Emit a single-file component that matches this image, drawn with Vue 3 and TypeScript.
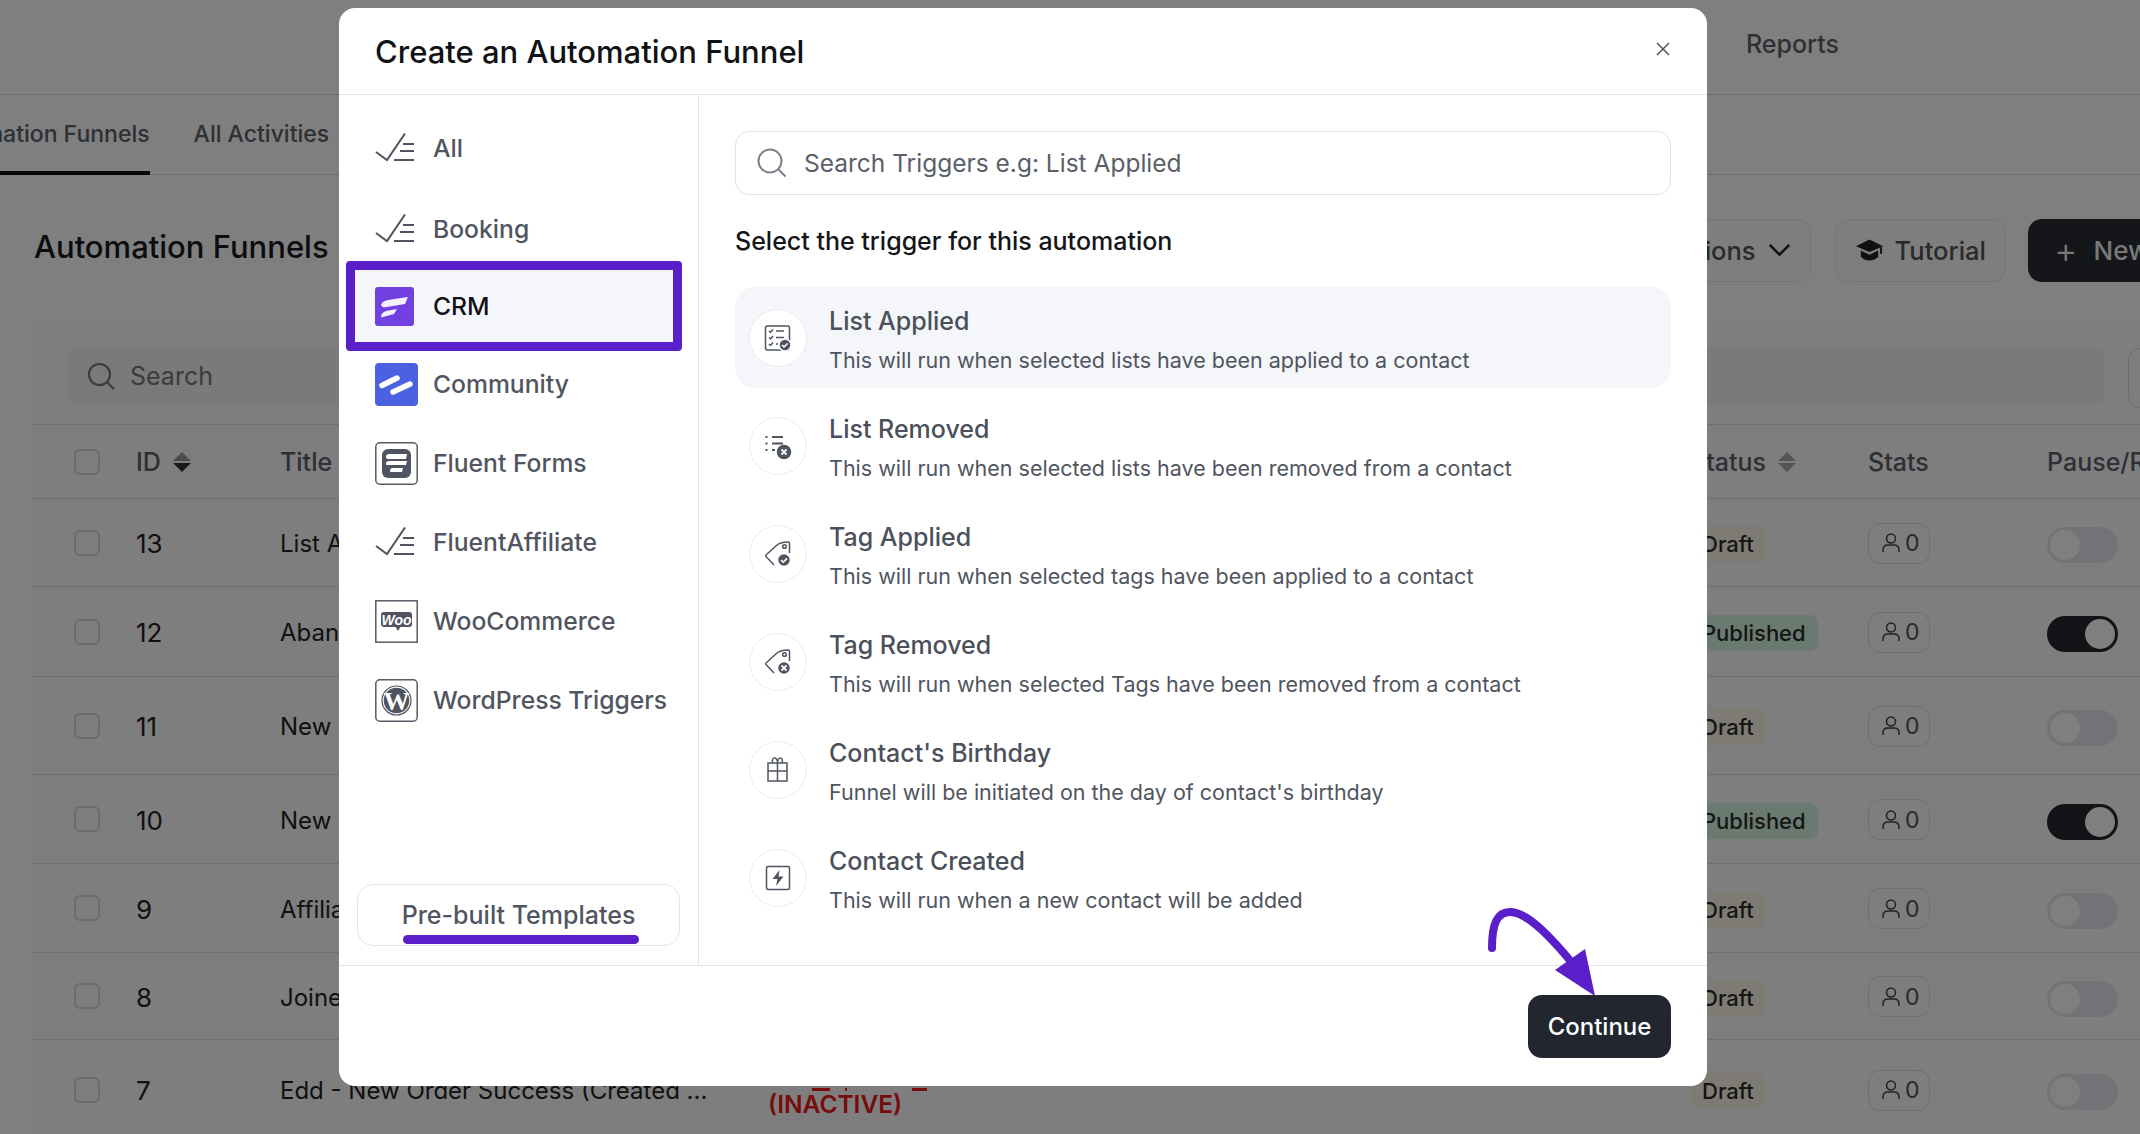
<script setup lang="ts">
interface Row { id: number; title: string; status: 'Draft' | 'Published'; on: boolean; height: number; label?: boolean }
interface Trigger { title: string; desc: string; icon: string; active?: boolean }

const rows: Row[] = [
  { id: 13, title: 'List Applied', status: 'Draft', on: false, height: 88 },
  { id: 12, title: 'Abandoned Cart', status: 'Published', on: true, height: 90 },
  { id: 11, title: 'New Contact', status: 'Draft', on: false, height: 98 },
  { id: 10, title: 'New Order', status: 'Published', on: true, height: 89 },
  { id: 9, title: 'Affiliate Joined', status: 'Draft', on: false, height: 89 },
  { id: 8, title: 'Joined List', status: 'Draft', on: false, height: 87 },
  { id: 7, title: 'Edd - New Order Success (Created ...', status: 'Draft', on: false, height: 100, label: true },
]

const triggers: Trigger[] = [
  { title: 'List Applied', desc: 'This will run when selected lists have been applied to a contact', icon: 'listok', active: true },
  { title: 'List Removed', desc: 'This will run when selected lists have been removed from a contact', icon: 'listx' },
  { title: 'Tag Applied', desc: 'This will run when selected tags have been applied to a contact', icon: 'tagok' },
  { title: 'Tag Removed', desc: 'This will run when selected Tags have been removed from a contact', icon: 'tagx' },
  { title: "Contact's Birthday", desc: "Funnel will be initiated on the day of contact's birthday", icon: 'gift' },
  { title: 'Contact Created', desc: 'This will run when a new contact will be added', icon: 'bolt' },
]

const cats: { name: string; icon: string }[] = [
  { name: 'All', icon: 'check' },
  { name: 'Booking', icon: 'check' },
  { name: 'CRM', icon: 'crm' },
  { name: 'Community', icon: 'community' },
  { name: 'Fluent Forms', icon: 'forms' },
  { name: 'FluentAffiliate', icon: 'check' },
  { name: 'WooCommerce', icon: 'woo' },
  { name: 'WordPress Triggers', icon: 'wp' },
]
</script>

<template>
  <div class="page">
    <nav class="topnav"><span class="nav-link">Reports</span></nav>
    <div class="tabs">
      <span class="tab tab-on">Automation Funnels</span>
      <span class="tab">All Activities</span>
    </div>
    <header class="head">
      <h1 class="head-title">Automation Funnels</h1>
      <button class="ghost ghost-options">Options
        <svg width="23" height="14" viewBox="0 0 20 12"><path d="M1.500 1.500 10 10l8.500-8.500" fill="none" stroke="#222" stroke-width="2.200"/></svg>
      </button>
      <button class="ghost ghost-tut">
        <svg width="27" height="22" viewBox="0 0 28 22"><path d="M14 0 28 7 14 13 0 7z" fill="#222"/><path d="M5 11.500 14 16l9-4.500V18c-2 2.500-5.500 4-9 4s-7-1.500-9-4z" fill="#222"/><path d="M26 8v7" stroke="#222" stroke-width="2"/></svg>
        Tutorial
      </button>
      <button class="primary"><span class="plus">+</span>New Funnel</button>
    </header>

    <section class="card">
      <div class="tools">
        <div class="bg-search">
          <svg width="28" height="28" viewBox="0 0 28 28" fill="none" stroke="#777" stroke-width="2.200"><circle cx="12.500" cy="12.500" r="10.500"/><path d="m20 20 7 7"/></svg>
          <span>Search</span>
        </div>
        <div class="filter"></div>
      </div>
      <div class="trow thead">
        <span class="box"></span>
        <span class="th">ID
          <svg class="sort" width="18" height="20" viewBox="0 0 18 20"><path d="M9 0 18 9H0z" fill="#999"/><path d="M0 11h18l-9 9z" fill="#333"/></svg>
        </span>
        <span class="th">Title</span>
        <span class="th">Status
          <svg class="sort" width="18" height="20" viewBox="0 0 18 20"><path d="M9 0 18 9H0z" fill="#aaa"/><path d="M0 11h18l-9 9z" fill="#aaa"/></svg>
        </span>
        <span class="th">Stats</span>
        <span class="th">Pause/Run</span>
      </div>
      <div v-for="r in rows" :key="r.id" class="trow" :style="{ height: r.height + 'px' }">
        <span class="box"></span>
        <span class="cell">{{ r.id }}</span>
        <span class="cell title-cell">
          <span class="name">{{ r.title }}</span>
          <span v-if="r.label" class="label">
            <span class="marks"><i class="m1"></i><i class="m2"></i><i class="m3"></i></span>
            <span class="inactive">(INACTIVE)</span>
          </span>
        </span>
        <span class="pill-cell"><span class="pill" :class="r.status === 'Draft' ? 'pill-draft' : 'pill-pub'">{{ r.status }}</span></span>
        <span class="stat">
          <svg width="18" height="20" viewBox="0 0 18 20" fill="none" stroke="#444" stroke-width="1.500"><circle cx="9" cy="5.500" r="4.500"/><path d="M1 19v-2c0-3 2-5 5-5h6c3 0 5 2 5 5v2"/></svg>
          <span>0</span>
        </span>
        <span class="toggle" :class="{ 'toggle-on': r.on }"><i></i></span>
      </div>
    </section>

    <div class="overlay"></div>

    <div class="modal">
      <div class="m-head">
        <h2 class="m-title">Create an Automation Funnel</h2>
        <svg class="m-close" width="16" height="16" viewBox="0 0 16 16"><path d="m2 2 12 12M14 2 2 14" stroke="#555" stroke-width="1.500"/></svg>
      </div>
      <div class="m-body">
        <aside class="side">
          <div class="cats">
            <div v-for="c in cats" :key="c.name" class="cat" :class="{ 'cat-on': c.name === 'CRM', 'cat-booking': c.name === 'Booking' }">
              <span class="cat-icon">
                <svg v-if="c.icon === 'check'" width="40" height="30" viewBox="0 0 40 30" fill="none" stroke="#4f5560" stroke-width="2">
                  <path d="M1 19l11 8L30 .5"/><path d="M28 11h11M25 18h14M19 27h20"/>
                </svg>
                <svg v-else-if="c.icon === 'crm'" width="39" height="39" viewBox="0 0 39 39">
                  <rect width="39" height="39" rx="3" fill="#7040e0"/>
                  <path d="M6 18c1-3 3-4 7-5l20-3-3 7-18 3c-3 .5-5 .5-6-2z" fill="#fff" opacity=".92"/>
                  <path d="M6 30c0-3 2-5 5-6l11-2-3 5-9 2.500c-2 .5-3.500 1-4 .5z" fill="#fff" opacity=".92"/>
                </svg>
                <svg v-else-if="c.icon === 'community'" width="43" height="43" viewBox="0 0 43 43">
                  <rect width="43" height="43" rx="4" fill="#4a62e2"/>
                  <path d="M7 22.500 22 15M18 29l17-8" stroke="#fff" stroke-width="5.500" stroke-linecap="round"/>
                </svg>
                <svg v-else-if="c.icon === 'forms'" width="43" height="43" viewBox="0 0 43 43">
                  <rect x=".8" y=".8" width="41.400" height="41.400" rx="4" fill="#fff" stroke="#565b66" stroke-width="1.500"/>
                  <rect x="7" y="7" width="29" height="29" rx="6" fill="#4f5460"/>
                  <path d="M11 15c0-2 1-3 3-3h18l-1 5H13c-1 0-2-1-2-2zM11 22c0-2 1-3 3-3h18l-1 4H13c-1 0-2 0-2-1zM15 29c0-2 1-3 3-3h10l-1 4H17c-1 0-2 0-2-1z" fill="#fff"/>
                </svg>
                <svg v-else-if="c.icon === 'woo'" width="43" height="43" viewBox="0 0 43 43">
                  <rect x=".8" y=".8" width="41.400" height="41.400" fill="#fff" stroke="#565b66" stroke-width="1.500"/>
                  <rect x="6" y="12" width="31" height="15" rx="3" fill="#4f5460"/>
                  <path d="M20 26h6l-3 5z" fill="#4f5460"/>
                  <text x="21.500" y="24.500" text-anchor="middle" class="woo-text">Woo</text>
                </svg>
                <svg v-else width="43" height="43" viewBox="0 0 43 43">
                  <rect x=".8" y=".8" width="41.400" height="41.400" rx="4" fill="#fff" stroke="#565b66" stroke-width="1.500"/>
                  <circle cx="21.500" cy="21.500" r="14.500" fill="none" stroke="#4f5460" stroke-width="1.200"/>
                  <circle cx="21.500" cy="21.500" r="12.800" fill="#4f5460"/>
                  <text x="21.500" y="30.500" text-anchor="middle" class="wp-text">W</text>
                </svg>
              </span>
              <span class="cat-name">{{ c.name }}</span>
            </div>
          </div>
          <button class="tpl">Pre-built Templates<span class="tpl-line"></span></button>
        </aside>
        <main class="main">
          <div class="search">
            <svg width="30" height="30" viewBox="0 0 30 30" fill="none" stroke="#7a808a" stroke-width="2"><circle cx="13" cy="13" r="11.500"/><path d="m21.500 21.500 7 7"/></svg>
            <span>Search Triggers e.g: List Applied</span>
          </div>
          <h3 class="pick">Select the trigger for this automation</h3>
          <div class="list">
            <div v-for="t in triggers" :key="t.title" class="item" :class="{ 'item-on': t.active }">
              <span class="round">
                <svg width="28" height="28" viewBox="0 0 28 28" fill="none" stroke="#4f5560" stroke-width="1.500">
                  <template v-if="t.icon === 'listok'">
                    <rect x="1.500" y="2" width="24" height="24" rx="2"/>
                    <path d="m5 7 1.500 1.500L9 5.500m-4 8 1.500 1.500L9 12m-4 8 1.500 1.500L9 18.500M12 7h8M12 13.500h8M12 20h2"/>
                    <circle cx="21" cy="21" r="6" fill="#4f5560" stroke="#fff"/>
                    <path d="m18 21 2 2 3.500-3.500" stroke="#fff"/>
                  </template>
                  <template v-else-if="t.icon === 'listx'">
                    <path d="M1.500 5h2M8 5h11M1.500 11.500h2M8 11.500h11M1.500 18h2M8 18h3" stroke-width="2.200"/>
                    <circle cx="20" cy="20" r="6.500" fill="#4f5560" stroke="#4f5560"/>
                    <path d="m17.500 17.500 5 5m0-5-5 5" stroke="#fff" stroke-width="1.800"/>
                  </template>
                  <template v-else-if="t.icon === 'tagok' || t.icon === 'tagx'">
                    <path d="M2 15 13 5c2-1.500 7-3 11-3 1 0 1.500.5 1.500 1.500V13" stroke-linejoin="round"/>
                    <path d="M2 15c-.5.5-.5 1 0 1.500L10 25"/>
                    <circle cx="20.500" cy="6.500" r="1.800"/>
                    <circle cx="20" cy="20" r="6.500" fill="#4f5560" stroke="#fff"/>
                    <path v-if="t.icon === 'tagok'" d="m17 20 2.200 2.200 3.800-3.800" stroke="#fff" stroke-width="1.600"/>
                    <path v-else d="m17.500 17.500 5 5m0-5-5 5" stroke="#fff" stroke-width="1.800"/>
                  </template>
                  <template v-else-if="t.icon === 'gift'">
                    <rect x="4" y="7" width="19" height="18" />
                    <path d="M4 15h19M13.500 7v18M9 7c-1-1-1-5 1.500-5S13.500 5 13.500 7c0-2 1-5 3-5s2.500 4 1 5"/>
                  </template>
                  <template v-else>
                    <rect x="2.500" y="2.500" width="23" height="23" rx="1.500"/>
                    <path d="M15.500 6 8.500 15h5l-1.500 7 7.500-9.500h-5z" fill="#4f5560" stroke="none"/>
                  </template>
                </svg>
              </span>
              <span class="item-text">
                <span class="item-title">{{ t.title }}</span>
                <span class="item-desc">{{ t.desc }}</span>
              </span>
            </div>
          </div>
        </main>
      </div>
      <div class="m-foot">
        <button class="go">Continue</button>
      </div>
    </div>

    <svg class="arrow" width="120" height="110" viewBox="0 0 120 110">
      <path d="M7 54C7 30 12 18 25 18c15 0 35 18 63 52" fill="none" stroke="#5b1fc9" stroke-width="8" stroke-linecap="round"/>
      <path d="M100 55 110 102 70 76z" fill="#5b1fc9"/>
    </svg>
  </div>
</template>

<style scoped>
.page {
  position: relative;
  width: 2140px;
  height: 1134px;
  overflow: hidden;
  background: #fff;
  font-family: Inter, "Noto Sans", sans-serif;
  color: #222;
}
.topnav {
  height: 88px;
  border-bottom: 1px solid #d8d8d8;
  display: flex;
  align-items: center;
  padding: 0 0 6px 1746px;
}
.nav-link { font-size: 25px; font-weight: 500; color: #5a6068; }
.tabs {
  display: flex;
  gap: 44px;
  height: 79px;
  align-items: stretch;
  border-bottom: 1px solid #d8d8d8;
  margin-left: -69px;
}
.tab { font-size: 23px; font-weight: 500; color: #5a6068; display: flex; align-items: center; white-space: nowrap; padding-bottom: 1px; }
.tab-on { border-bottom: 4px solid #111; margin-bottom: -1px; padding-bottom: 0; padding-top: 2px; }
.head {
  height: 148px;
  width: 2220px;
  display: flex;
  align-items: center;
  padding: 2px 0 0 34px;
  box-sizing: border-box;
}
.head-title { margin: 0 auto 7px 0; font-size: 31px; font-weight: 500; color: #16181d; }
.ghost {
  height: 63px;
  border: 1px solid #e8e8e8;
  border-radius: 14px;
  background: #fdfdfd;
  font: 500 25.500px Inter, sans-serif;
  color: #50545c;
  display: flex;
  align-items: center;
  gap: 12px;
  padding: 0 19px 0 20px;
}
.ghost-options { margin-right: 24px; }
.ghost-tut { margin-right: 22px; }
.primary {
  height: 63px;
  width: 192px;
  padding-left: 26px;
  border: none;
  border-radius: 14px;
  background: #282c34;
  color: #f2f2f2;
  font: 500 26px Inter, sans-serif;
  display: flex;
  align-items: center;
  white-space: nowrap;
  overflow: hidden;
}
.plus { font-size: 36px; font-weight: 300; margin-right: 16px; line-height: 1; }
.card { margin-left: 32px; background: #fcfcfc; }
.tools {
  height: 102px;
  display: flex;
  gap: 23px;
  padding: 25px 0 0 36px;
  box-sizing: border-box;
  border-bottom: 1px solid #dcdcdc;
}
.bg-search {
  width: 2037px;
  height: 56px;
  flex: none;
  background: #f4f4f4;
  border-radius: 8px;
  display: flex;
  align-items: center;
  gap: 15px;
  padding-left: 19px;
  box-sizing: border-box;
  font-size: 25px;
  color: #777;
}
.filter { width: 60px; height: 58px; flex: none; border: 1px solid #dedede; border-radius: 12px; }
.trow {
  display: grid;
  grid-template-columns: 62px 144px 1410px 178px 179px 200px;
  align-items: center;
  padding-left: 42px;
  border-bottom: 1px solid #dcdcdc;
  box-sizing: border-box;
}
.thead { height: 74px; }
.th { font-size: 25px; font-weight: 500; color: #5a6068; display: flex; align-items: center; gap: 12px; white-space: nowrap; padding-top: 1px; }
.sort { flex: none; }
.box { width: 26px; height: 26px; border: 2px solid #d8d8d8; border-radius: 6px; box-sizing: border-box; }
.cell { font-size: 26px; color: #222; white-space: nowrap; padding-top: 2px; }
.title-cell { display: flex; align-items: center; }
.name { width: 488px; font-size: 24px; flex: none; }
.label { display: flex; flex-direction: column; margin-top: 22px; }
.marks { display: flex; height: 3px; padding-left: 44px; gap: 15px; margin-bottom: 1px; }
.marks i { height: 3px; background: #f01818; display: block; }
.marks .m1 { width: 18px; }
.marks .m2 { width: 2px; }
.marks .m3 { width: 15px; margin-left: 50px; }
.inactive { font-size: 24.500px; line-height: 24px; font-weight: 600; color: #f01818; }
.pill-cell { padding-top: 3px; }
.pill { display: inline-block; border-radius: 8px; padding: 0 12px; font-size: 22px; line-height: 36px; font-weight: 500; color: #2a2a2a; }
.pill-draft { background: #fbf6e6; }
.pill-pub { background: #d6f5e3; }
.stat {
  width: 62px;
  height: 41px;
  margin-top: 1px;
  border: 1px solid #dedede;
  border-radius: 12px;
  display: flex;
  align-items: center;
  gap: 5px;
  padding-left: 13px;
  box-sizing: border-box;
  font-size: 23px;
  color: #555;
}
.toggle {
  display: block;
  width: 71px;
  height: 36px;
  margin-top: 5px;
  border-radius: 18px;
  background: #e4e7ec;
  position: relative;
}
.toggle i {
  position: absolute;
  top: 3px;
  left: 3px;
  width: 30px;
  height: 30px;
  border-radius: 50%;
  background: #fff;
}
.toggle-on { background: #22262e; }
.toggle-on i { left: 38px; }
.overlay { position: absolute; inset: 0; background: rgba(0, 0, 0, .5); }
.modal {
  position: absolute;
  left: 339px;
  top: 8px;
  width: 1368px;
  height: 1078px;
  background: #fff;
  border-radius: 16px;
  display: flex;
  flex-direction: column;
}
.m-head {
  height: 87px;
  flex: none;
  box-sizing: border-box;
  border-bottom: 1px solid #e5e6e9;
  display: flex;
  align-items: center;
  justify-content: space-between;
  padding: 0 36px;
}
.m-title { margin: 0; font-size: 31px; font-weight: 500; color: #101216; }
.m-close { margin-top: -4px; }
.m-body { flex: 1; display: flex; min-height: 0; }
.side {
  width: 360px;
  flex: none;
  box-sizing: border-box;
  border-right: 1px solid #e5e6e9;
  display: flex;
  flex-direction: column;
  padding: 23px 0 19px 7px;
}
.cats { display: flex; flex-direction: column; gap: 19px; }
.cat {
  width: 336px;
  height: 60px;
  box-sizing: border-box;
  display: flex;
  align-items: center;
  padding-left: 29px;
  font-size: 24.700px;
  font-weight: 500;
  color: #50555f;
  white-space: nowrap;
}
.cat-booking { margin-top: 2px; }
.cat-on {
  height: 90px;
  margin: -17px 0 -16px;
  border: 9px solid #5b1fc9;
  border-radius: 4px;
  padding-left: 20px;
  background: #f5f6fa;
  color: #101216;
}
.cat-icon { width: 58px; flex: none; display: flex; align-items: center; }
.woo-text { font: italic 700 14px "Liberation Sans", sans-serif; fill: #fff; }
.wp-text { font: 700 26px "Liberation Serif", serif; fill: #fff; }
.tpl {
  position: relative;
  margin: auto 0 0 11px;
  width: 323px;
  height: 62px;
  border: 1px solid #e5e6e9;
  border-radius: 16px;
  background: #fff;
  font: 500 25px Inter, sans-serif;
  color: #50555f;
  padding: 0;
}
.tpl-line {
  position: absolute;
  left: 45px;
  bottom: 1px;
  width: 236px;
  height: 9px;
  border-radius: 5px;
  background: #5b1fc9;
}
.main { flex: 1; padding: 36px 36px 0; min-width: 0; }
.search {
  height: 64px;
  box-sizing: border-box;
  border: 1px solid #e0e2e6;
  border-radius: 14px;
  display: flex;
  align-items: center;
  gap: 17px;
  padding-left: 21px;
  font-size: 24.500px;
  color: #5a5f69;
}
.pick { margin: 29px 0; font-size: 25px; line-height: 34px; font-weight: 500; color: #14161a; }
.list { display: flex; flex-direction: column; gap: 7px; }
.item {
  height: 101px;
  box-sizing: border-box;
  border-radius: 20px;
  display: flex;
  align-items: center;
  gap: 22px;
  padding-left: 14px;
}
.item-on { background: #f5f6fa; }
.round {
  width: 58px;
  height: 58px;
  flex: none;
  box-sizing: border-box;
  border: 1px solid #ebecef;
  border-radius: 50%;
  background: #fff;
  display: flex;
  align-items: center;
  justify-content: center;
}
.item-text { display: flex; flex-direction: column; gap: 6px; margin-top: 5px; }
.item-title { font-size: 25px; line-height: 34px; font-weight: 500; color: #4b505a; }
.item-desc { font-size: 21.500px; line-height: 32px; color: #50555f; }
.m-foot { flex: none; height: 121px; box-sizing: border-box; border-top: 1px solid #e5e6e9; display: flex; justify-content: flex-end; padding: 29px 36px 0; }
.go {
  width: 143px;
  height: 63px;
  border: none;
  border-radius: 14px;
  background: #22262f;
  color: #fff;
  font: 500 24px Inter, sans-serif;
}
.arrow { position: absolute; left: 1485px; top: 894px; overflow: visible; }
</style>

<style>
html, body { margin: 0; }
</style>
